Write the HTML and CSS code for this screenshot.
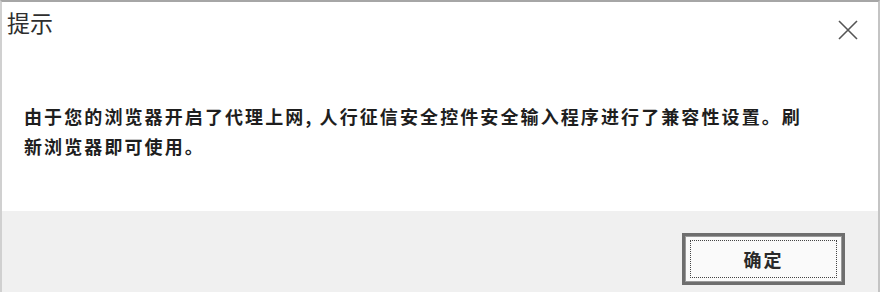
FILE: index.html
```html
<!DOCTYPE html>
<html lang="zh-CN">
<head>
<meta charset="utf-8">
<title>提示</title>
<link rel="stylesheet" href="styles.css">
</head>
<body>
<div class="dialog">
  <div class="titlebar">
    <span class="title">提示</span>
    <svg class="close" width="20" height="20" viewBox="0 0 20 20" aria-hidden="true">
      <path d="M1 1 L19 19 M19 1 L1 19" stroke="#555" stroke-width="1.6" fill="none"/>
    </svg>
  </div>
  <div class="content">
    <p class="msg">由于您的浏览器开启了代理上网, 人行征信安全控件安全输入程序进行了兼容性设置。刷新浏览器即可使用。</p>
  </div>
  <div class="footer">
    <button class="btn"><span class="focus">确定</span></button>
  </div>
</div>
</body>
</html>
```
FILE: styles.css
```css
html, body {
  margin: 0;
  padding: 0;
  background: #ffffff;
}
.dialog {
  width: 880px;
  height: 292px;
  box-sizing: border-box;
  border-top: 2px solid #a6a6a6;
  border-left: 2px solid #d0d0d0;
  border-right: 2px solid #c4c4c4;
  display: flex;
  flex-direction: column;
  font-family: "Noto Sans CJK SC", "Microsoft YaHei", sans-serif;
  color: #222;
}
.titlebar {
  height: 48px;
  flex: none;
  display: flex;
  justify-content: space-between;
  align-items: flex-start;
  padding: 5px 20px 0 5px;
  box-sizing: border-box;
  background: #fff;
}
.title {
  font-size: 23px;
  line-height: 30px;
  color: #2e2e2e;
}
.close {
  margin-top: 13px;
}
.content {
  flex: none;
  height: 161px;
  box-sizing: border-box;
  padding: 51px 0 0 22px;
  background: #fff;
}
.msg {
  margin: 0;
  width: 795px;
  font-size: 18px;
  line-height: 30px;
  letter-spacing: 2.1px;
  font-weight: bold;
  color: #1e1e1e;
}
.footer {
  flex: 1;
  background: #f0f0f0;
  display: flex;
  justify-content: flex-end;
  align-items: flex-start;
  padding: 22px 33px 0 0;
}
.btn {
  width: 163px;
  height: 52px;
  box-sizing: border-box;
  border: 3px solid #6e6e6e;
  box-shadow: inset 0 0 0 1px #9a9a9a;
  background: #fafafa;
  padding: 4px 5px;
  margin: 0;
  display: flex;
}
.focus {
  flex: 1;
  border: 1px dotted #444;
  display: flex;
  align-items: center;
  justify-content: center;
  font-family: "Noto Sans CJK SC", sans-serif;
  font-size: 18px;
  font-weight: bold;
  letter-spacing: 2px;
  color: #2a2a2a;
}
```
